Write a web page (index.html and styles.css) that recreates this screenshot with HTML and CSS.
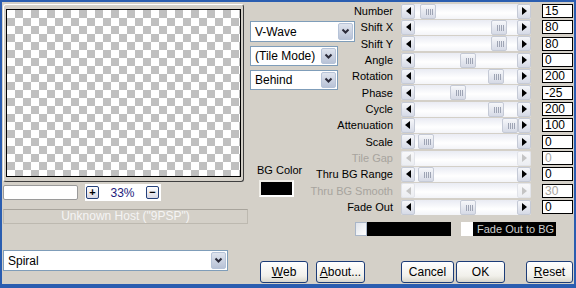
FILE: index.html
```html
<!DOCTYPE html>
<html>
<head>
<meta charset="utf-8">
<link rel="stylesheet" href="styles.css">
</head>
<body>
<div class="window">
  <div class="left">
    <div class="frame"><div class="preview"></div></div>
    <div class="zoomrow">
      <div class="textbox"></div>
      <div class="zoompanel">
        <span class="zbtn">+</span>
        <span class="zval">33%</span>
        <span class="zbtn">&minus;</span>
      </div>
    </div>
    <div class="status">Unknown Host ("9PSP")</div>
    <div class="combo spiral"><span class="ctext">Spiral</span><span class="cbtn"><svg width="9" height="7" viewBox="0 0 9 7"><polyline points="1.5,1.5 4.5,4.5 7.5,1.5" fill="none" stroke="#2b2b3a" stroke-width="2"/></svg></span></div>
  </div>
  <div class="right">
    <div class="upper">
      <div class="mid">
        <div class="combo wave"><span class="ctext">V-Wave</span><span class="cbtn"><svg width="9" height="7" viewBox="0 0 9 7"><polyline points="1.5,1.5 4.5,4.5 7.5,1.5" fill="none" stroke="#2b2b3a" stroke-width="2"/></svg></span></div>
        <div class="combo mode"><span class="ctext">(Tile Mode)</span><span class="cbtn"><svg width="9" height="7" viewBox="0 0 9 7"><polyline points="1.5,1.5 4.5,4.5 7.5,1.5" fill="none" stroke="#2b2b3a" stroke-width="2"/></svg></span></div>
        <div class="combo mode"><span class="ctext">Behind</span><span class="cbtn"><svg width="9" height="7" viewBox="0 0 9 7"><polyline points="1.5,1.5 4.5,4.5 7.5,1.5" fill="none" stroke="#2b2b3a" stroke-width="2"/></svg></span></div>
        <div class="bglabel">BG Color</div>
        <div class="swatch"></div>
      </div>
      <div class="sliders">
        <div class="lbl">Number</div>
        <div class="slider"><span class="sbtn"><i class="al"></i></span><span class="track"><span class="thumb" style="margin-left:5px"></span></span><span class="sbtn"><i class="ar"></i></span></div>
        <div class="val">15</div>

        <div class="lbl">Shift X</div>
        <div class="slider"><span class="sbtn"><i class="al"></i></span><span class="track"><span class="thumb" style="margin-left:76px"></span></span><span class="sbtn"><i class="ar"></i></span></div>
        <div class="val">80</div>

        <div class="lbl">Shift Y</div>
        <div class="slider"><span class="sbtn"><i class="al"></i></span><span class="track"><span class="thumb" style="margin-left:76px"></span></span><span class="sbtn"><i class="ar"></i></span></div>
        <div class="val">80</div>

        <div class="lbl">Angle</div>
        <div class="slider"><span class="sbtn"><i class="al"></i></span><span class="track"><span class="thumb" style="margin-left:45px"></span></span><span class="sbtn"><i class="ar"></i></span></div>
        <div class="val">0</div>

        <div class="lbl">Rotation</div>
        <div class="slider"><span class="sbtn"><i class="al"></i></span><span class="track"><span class="thumb" style="margin-left:73px"></span></span><span class="sbtn"><i class="ar"></i></span></div>
        <div class="val">200</div>

        <div class="lbl">Phase</div>
        <div class="slider"><span class="sbtn"><i class="al"></i></span><span class="track"><span class="thumb" style="margin-left:35px"></span></span><span class="sbtn"><i class="ar"></i></span></div>
        <div class="val">-25</div>

        <div class="lbl">Cycle</div>
        <div class="slider"><span class="sbtn"><i class="al"></i></span><span class="track"><span class="thumb" style="margin-left:73px"></span></span><span class="sbtn"><i class="ar"></i></span></div>
        <div class="val">200</div>

        <div class="lbl">Attenuation</div>
        <div class="slider"><span class="sbtn"><i class="al"></i></span><span class="track"><span class="thumb" style="margin-left:87px"></span></span><span class="sbtn"><i class="ar"></i></span></div>
        <div class="val">100</div>

        <div class="lbl">Scale</div>
        <div class="slider"><span class="sbtn"><i class="al"></i></span><span class="track"><span class="thumb" style="margin-left:3px"></span></span><span class="sbtn"><i class="ar"></i></span></div>
        <div class="val">0</div>

        <div class="lbl off">Tile Gap</div>
        <div class="slider off"><span class="sbtn"><i class="al"></i></span><span class="track"></span><span class="sbtn"><i class="ar"></i></span></div>
        <div class="val off">0</div>

        <div class="lbl">Thru BG Range</div>
        <div class="slider"><span class="sbtn"><i class="al"></i></span><span class="track"><span class="thumb" style="margin-left:3px"></span></span><span class="sbtn"><i class="ar"></i></span></div>
        <div class="val">0</div>

        <div class="lbl off">Thru BG Smooth</div>
        <div class="slider off"><span class="sbtn"><i class="al"></i></span><span class="track"></span><span class="sbtn"><i class="ar"></i></span></div>
        <div class="val off">30</div>

        <div class="lbl">Fade Out</div>
        <div class="slider"><span class="sbtn"><i class="al"></i></span><span class="track"><span class="thumb" style="margin-left:45px"></span></span><span class="sbtn"><i class="ar"></i></span></div>
        <div class="val">0</div>
      </div>
    </div>
    <div class="faderow">
      <span class="chk"></span><span class="blackbar"></span>
      <span class="wbox"></span><span class="fadelbl">Fade Out to BG</span>
    </div>
    <div class="buttons">
      <span class="btn w48"><u>W</u>eb</span>
      <span class="btn w49 g8"><u>A</u>bout...</span>
      <span class="btn w53 g36">Cancel</span>
      <span class="btn w49 g2">OK</span>
      <span class="btn w47 g21"><u>R</u>eset</span>
    </div>
  </div>
</div>
</body>
</html>
```

FILE: styles.css
```css
* { box-sizing: border-box; }
html, body { margin: 0; padding: 0; }
body { width: 576px; height: 288px; overflow: hidden; }

.window {
  width: 576px;
  height: 288px;
  border: 2px solid #2a5db0;
  border-bottom-width: 4px;
  background: #d4d0c8;
  display: flex;
  font: 11px "Liberation Sans", Arial, sans-serif;
  color: #000;
}

/* left column */
.left { width: 248px; padding-left: 1px; display: flex; flex-direction: column; }
.frame {
  margin-top: 2px;
  width: 241px;
  height: 178px;
  border: 1px solid;
  border-color: #ffffff #404040 #404040 #ffffff;
  border-radius: 3px;
  padding: 4px 1px 4px 2px;
}
.preview {
  width: 235px;
  height: 168px;
  border: 1px solid #000;
  background: repeating-conic-gradient(#c0c0c0 0 25%, #ffffff 0 50%) 0 0 / 16px 16px;
}
.zoomrow { margin-top: 2px; height: 17px; display: flex; align-items: center; }
.textbox {
  width: 75px; height: 15px;
  background: #fff;
  border: 1px solid #9a9a9a;
  border-radius: 2px;
}
.zoompanel {
  margin-left: 7px;
  width: 76px; height: 17px;
  background: #fff;
  display: flex; align-items: center;
  padding-left: 1px;
}
.zbtn {
  width: 13px; height: 13px;
  border: 1px solid #24407a;
  border-radius: 2px;
  background: linear-gradient(#ffffff, #d8d8e4);
  font-size: 11px; line-height: 11px; font-weight: bold;
  text-align: center; color: #000;
}
.zval { width: 47px; text-align: center; color: #1c1c7c; font-size: 12px; }
.status {
  margin-top: 8px;
  width: 245px; height: 15px;
  border: 1px solid #bdb9b0;
  border-top-color: #a8a49c;
  color: #f4f4f4;
  text-align: center;
  font-size: 12px; line-height: 13px;
}

.combo {
  display: flex; align-items: center;
  background: #fff;
  border: 1px solid #7f9db9;
  padding-left: 4px;
  font-size: 12px;
}
.ctext { flex: 1; white-space: nowrap; }
.cbtn {
  width: 15px; height: 17px; margin-right: 1px;
  border: 1px solid #b6c3d8;
  border-radius: 2px;
  background: linear-gradient(#dfe4ee, #b8c2d6);
  display: flex; align-items: center; justify-content: center;
}
.spiral { margin-top: 26px; width: 225px; height: 21px; }

/* right column */
.right { width: 324px; display: flex; flex-direction: column; }
.upper { display: flex; }
.mid { width: 105px; display: flex; flex-direction: column; }
.wave { margin-top: 19px; width: 105px; height: 21px; }
.mode { margin-top: 4px; width: 88px; height: 20px; }
.mode .cbtn { height: 16px; }
.bglabel { margin-top: 74px; margin-left: 7px; font-size: 11px; }
.swatch {
  margin-top: 4px; margin-left: 9px;
  width: 35px; height: 17px;
  background: #000;
  border: 2px solid #f0eee8;
  border-right-color: #fff; border-bottom-color: #fff;
}

.sliders {
  margin-top: 1px;
  width: 218px;
  display: grid;
  grid-template-columns: 38px 130px 31px;
  column-gap: 8px;
  grid-template-rows: repeat(13, 16.33px);
  align-items: center;
}
.lbl { justify-self: end; white-space: nowrap; font-size: 11px; }
.lbl.off { color: #a7a49e; }
.slider {
  height: 15px;
  display: flex;
  background: linear-gradient(#e9ebf3, #ffffff 60%, #f3f4f8);
  border-radius: 2px;
}
.sbtn {
  width: 14px; height: 15px;
  border: 1px solid #c5cad6;
  border-radius: 2px;
  background: linear-gradient(#f6f7fa, #d6dae6);
  display: flex; align-items: center; justify-content: center;
}
.al { width: 0; height: 0; border-top: 4px solid transparent; border-bottom: 4px solid transparent; border-right: 5px solid #000; }
.ar { width: 0; height: 0; border-top: 4px solid transparent; border-bottom: 4px solid transparent; border-left: 5px solid #000; }
.slider.off .al { border-right-color: #c4c4c4; }
.slider.off .ar { border-left-color: #c4c4c4; }
.slider.off .sbtn { border-color: #e2e4ea; background: linear-gradient(#f8f8fa, #eceef2); }
.track { flex: 1; display: flex; }
.thumb {
  width: 16px; height: 15px;
  border: 1px solid #c5cad6;
  border-radius: 2px;
  background:
    repeating-linear-gradient(90deg, #9ea4b4 0 1px, transparent 1px 2px) 5px 4px / 7px 6px no-repeat,
    linear-gradient(#f6f7fa, #d6dae6);
}
.val {
  width: 31px; height: 14px;
  background: #fff;
  border: 1px solid #000;
  padding-left: 2px;
  font-size: 12px; line-height: 12px;
  margin-left: 3px;
}
.val.off { color: #a7a49e; }

.faderow { margin-top: 7px; padding-left: 105px; height: 14px; display: flex; }
.chk {
  width: 12px; height: 14px;
  border: 1px solid #a9b6c8;
  background: linear-gradient(135deg, #dfe3ea, #ffffff);
}
.blackbar { width: 84px; height: 14px; background: #000; }
.wbox { margin-left: 10px; width: 12px; height: 14px; background: #fff; }
.fadelbl {
  width: 83px; height: 14px; background: #000; color: #cfcfcf;
  font-size: 11px; line-height: 14px; padding-left: 4px; white-space: nowrap;
}

.buttons { margin-top: 25px; padding-left: 10px; display: flex; }
.btn {
  height: 22px;
  border: 1px solid #1c3c78;
  border-radius: 3px;
  background: linear-gradient(#ffffff, #f1f0ea 70%, #d8d6cc);
  display: flex; align-items: center; justify-content: center;
  font-size: 12px;
}
.btn u { text-decoration: underline; }
.w47 { width: 47px; } .w48 { width: 48px; } .w49 { width: 49px; } .w53 { width: 53px; }
.g2 { margin-left: 2px; } .g8 { margin-left: 8px; } .g21 { margin-left: 21px; } .g36 { margin-left: 36px; }
```
